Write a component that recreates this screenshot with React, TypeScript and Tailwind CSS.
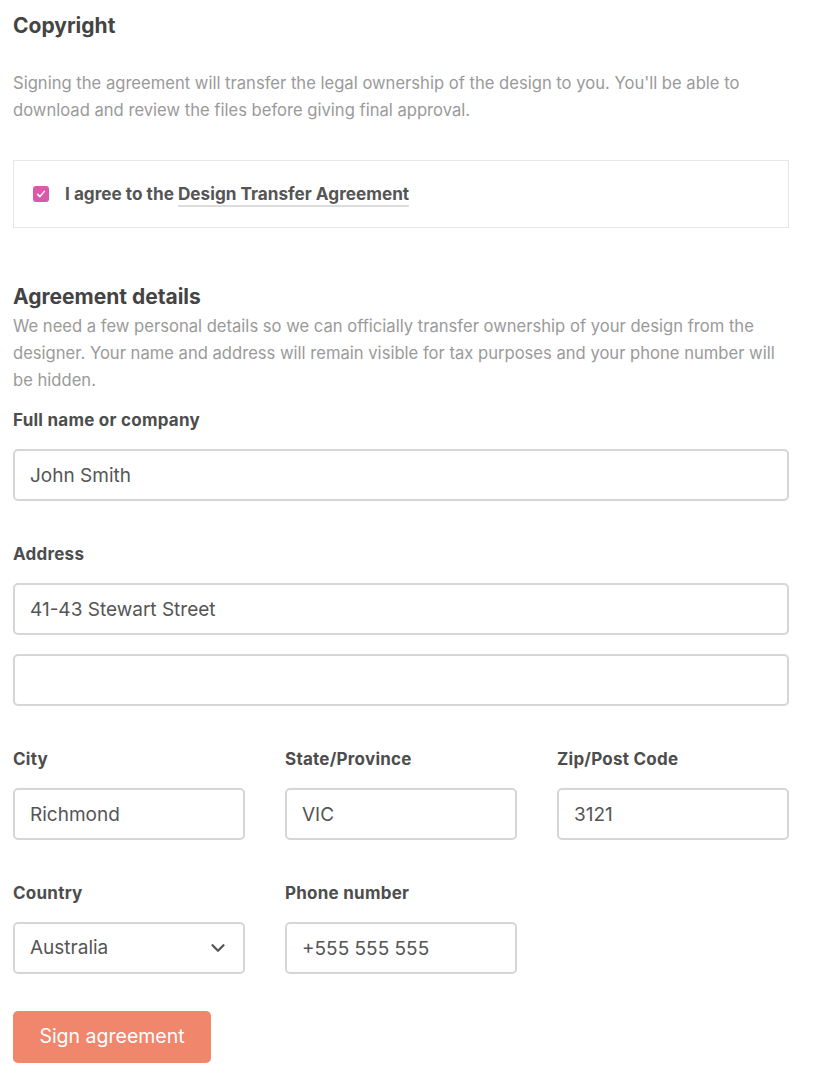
import { ChevronDown } from "lucide-react";

const inputCls =
  "h-[52px] w-full rounded-[5px] border-2 border-[#d6d6d6] bg-white px-[15px] text-[19px] text-[#555] outline-none";

const labelCls = "mb-[17px] block text-[17px] font-bold leading-[24px] tracking-[0.25px] text-[#4d4d4d]";

function Field({ label, value, className = "" }: { label: string; value: string; className?: string }) {
  return (
    <div className={className}>
      <label className={labelCls}>{label}</label>
      <input className={inputCls} defaultValue={value} />
    </div>
  );
}

export default function App() {
  return (
    <div
      className="min-h-[1082px] w-[814px] bg-white pl-[13px] pt-[12px]"
      style={{ fontFamily: "Inter, 'Liberation Sans', sans-serif" }}
    >
      <div className="w-[776px]">
        {/* Copyright */}
        <h2 className="text-[21px] font-bold leading-[28px] text-[#444]">Copyright</h2>
        <p className="mt-[30px] text-[16.6px] leading-[27px] text-[#9a9a9a]">
          Signing the agreement will transfer the legal ownership of the design to you. You'll be able to download
          and review the files before giving final approval.
        </p>

        <div className="mt-[36px] flex h-[68px] items-center border border-[#e6e6e6] px-[19px]">
          <span className="flex h-[16px] w-[16px] items-center justify-center rounded-[3px] bg-[#d95aa8]">
            <svg viewBox="0 0 16 16" className="h-[12px] w-[12px]" fill="none">
              <path d="M3.5 8.5l3 3 6-7" stroke="white" strokeWidth="2" strokeLinecap="round" strokeLinejoin="round" />
            </svg>
          </span>
          <span className="ml-[16px] text-[17.2px] font-bold text-[#555]">
            I agree to the{" "}
            <span className="border-b-2 border-[#dcdcdc] pb-[1px]">Design Transfer Agreement</span>
          </span>
        </div>

        {/* Agreement details */}
        <h2 className="mt-[54px] text-[21px] font-bold leading-[30px] text-[#444]">Agreement details</h2>
        <p className="mt-[1px] text-[16.6px] leading-[27px] text-[#9a9a9a]">
          We need a few personal details so we can officially transfer ownership of your design from the designer.
          Your name and address will remain visible for tax purposes and your phone number will be hidden.
        </p>

        <Field className="mt-[14px]" label="Full name or company" value="John Smith" />

        <div className="mt-[41px]">
          <label className={labelCls}>Address</label>
          <input className={inputCls} defaultValue="41-43 Stewart Street" />
          <input className={`${inputCls} mt-[19px]`} defaultValue="" />
        </div>

        <div className="mt-[41px] grid grid-cols-3 gap-x-[40px]">
          <Field label="City" value="Richmond" />
          <Field label="State/Province" value="VIC" />
          <Field label="Zip/Post Code" value="3121" />
        </div>

        <div className="mt-[41px] grid grid-cols-3 gap-x-[40px]">
          <div>
            <label className={labelCls}>Country</label>
            <div className={`${inputCls} flex items-center justify-between pr-[14px]`}>
              <span>Australia</span>
              <ChevronDown className="h-[22px] w-[22px] text-[#555]" strokeWidth={2.5} />
            </div>
          </div>
          <Field label="Phone number" value="+555 555 555" />
        </div>

        <button className="mt-[37px] h-[52px] w-[198px] rounded-[5px] bg-[#f0866c] text-[19.5px] text-white">
          Sign agreement
        </button>
      </div>
    </div>
  );
}
